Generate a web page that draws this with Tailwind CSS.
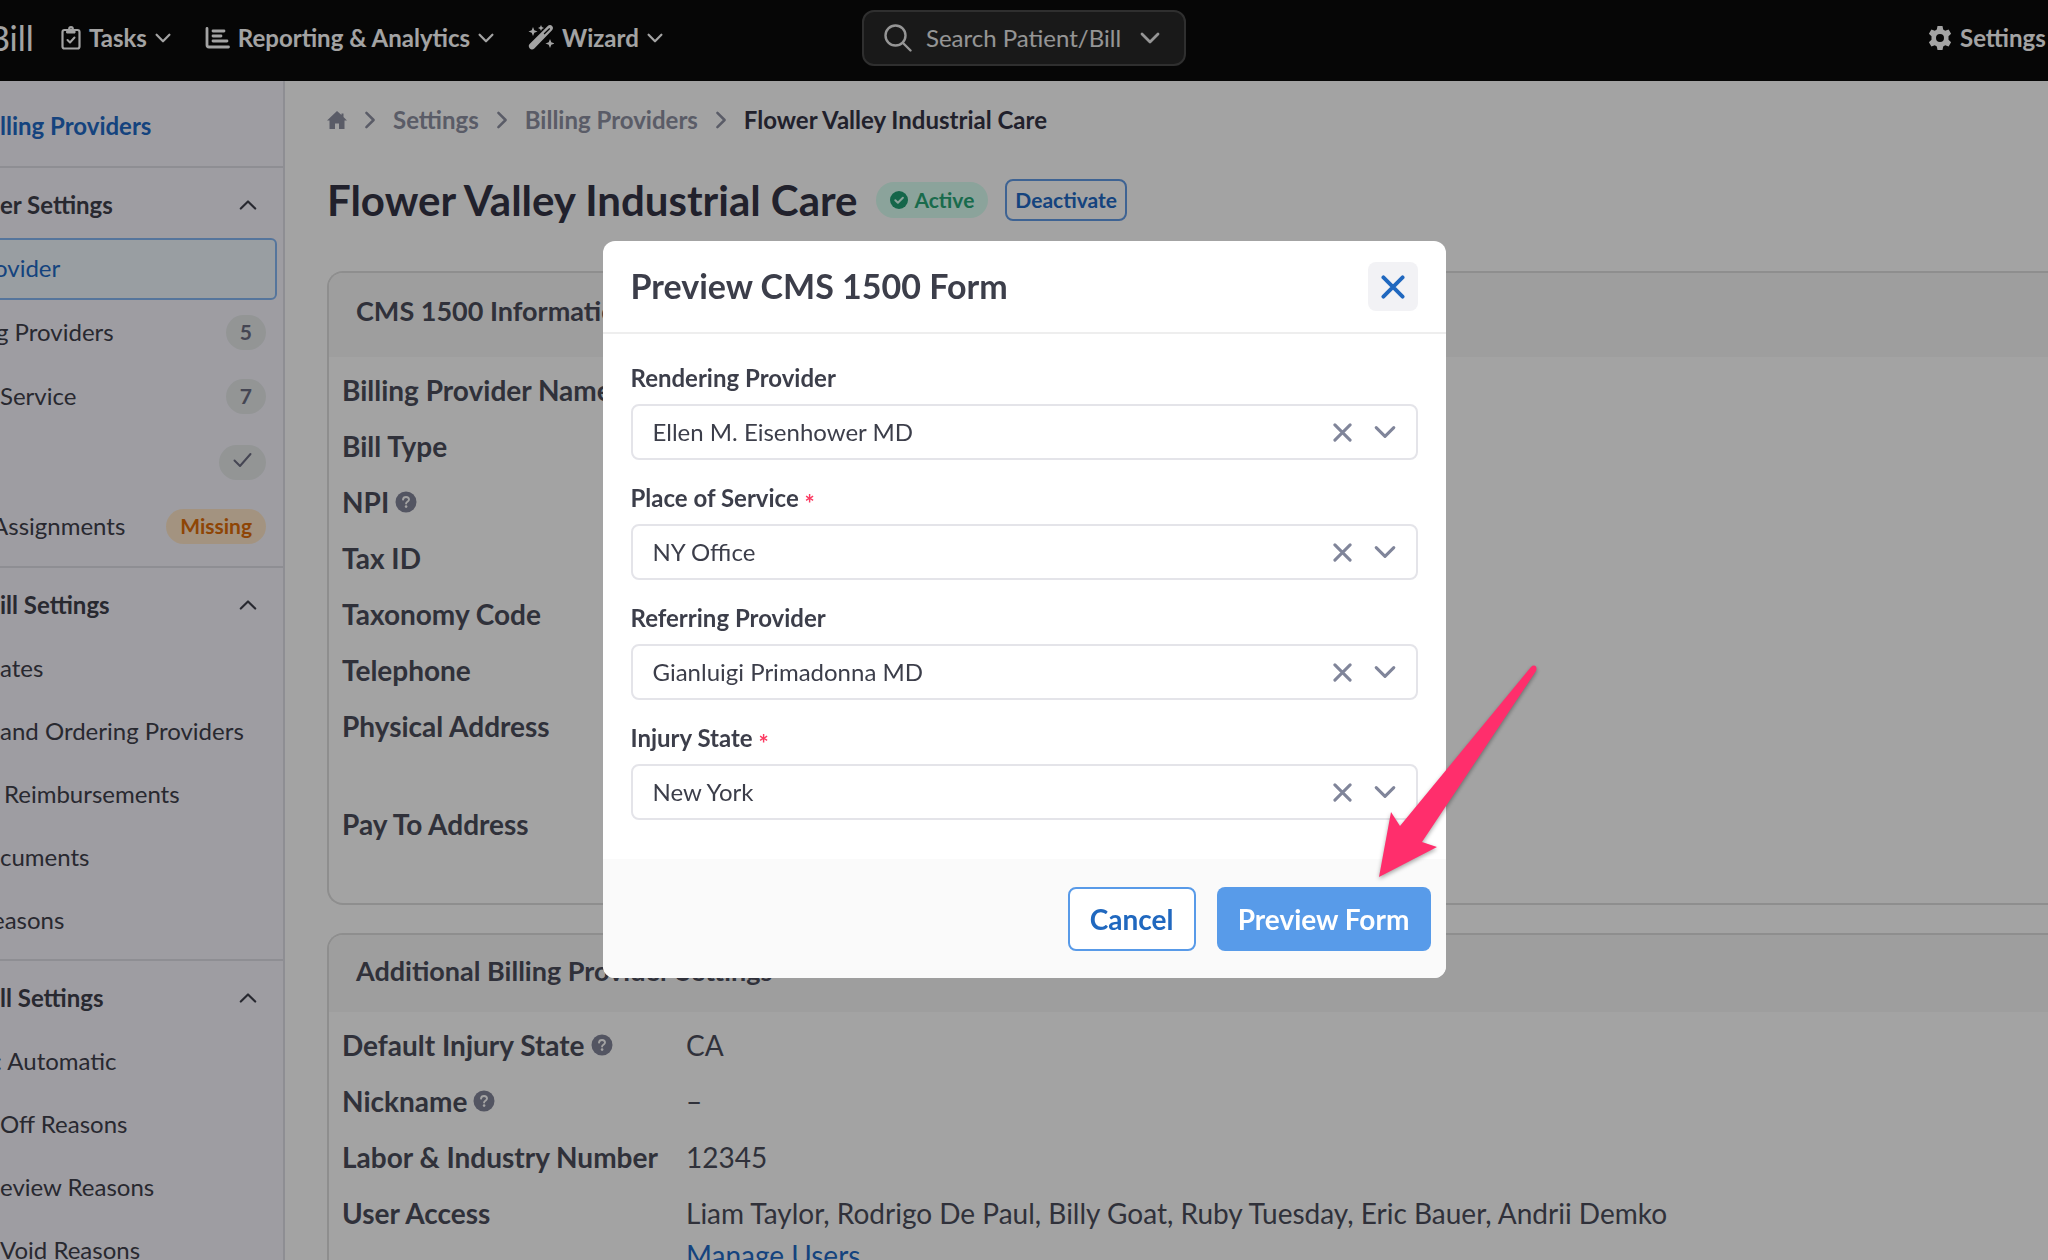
<!DOCTYPE html>
<html lang="en">
<head>
  <meta charset="UTF-8">
  <meta name="viewport" content="width=device-width, initial-scale=1.0">
  <title>Flower Valley Industrial Care</title>
  <script src="https://cdn.jsdelivr.net/npm/@tailwindcss/browser@4"></script>
</head>
<body class="h-screen overflow-hidden flex flex-col bg-white font-['Lato',sans-serif] text-[#4b4e5c]">

  <!-- Shared icons -->
  <svg class="hidden">
    <symbol id="chevron" viewBox="0 0 20 12"><path d="M2 2l8 8 8-8" fill="none" stroke="currentColor" stroke-width="2.800" stroke-linecap="round" stroke-linejoin="round"/></symbol>
    <symbol id="chevron-up" viewBox="0 0 20 12"><path d="M2 10l8-8 8 8" fill="none" stroke="currentColor" stroke-width="2.400" stroke-linecap="round" stroke-linejoin="round"/></symbol>
    <symbol id="chevron-right" viewBox="0 0 12 20"><path d="M2 2l8 8-8 8" fill="none" stroke="currentColor" stroke-width="2.800" stroke-linecap="round" stroke-linejoin="round"/></symbol>
    <symbol id="cross" viewBox="0 0 20 20"><path d="M2 2l16 16M18 2L2 18" fill="none" stroke="currentColor" stroke-width="3.200" stroke-linecap="round"/></symbol>
    <symbol id="help" viewBox="0 0 22 22"><circle cx="11" cy="11" r="10.5" fill="#838599"/><path d="M8 8.6C8.2 6.8 9.5 6 11 6c1.700 0 3 1 3 2.600 0 2.100-2.900 2.300-2.900 4" fill="none" stroke="#fff" stroke-width="1.900" stroke-linecap="round"/><circle cx="11.100" cy="15.600" r="1.300" fill="#fff"/></symbol>
  </svg>

  <!-- Top bar -->
  <header class="h-[81px] shrink-0 flex items-center bg-[#0a0a0a] text-white pb-1.5">
    <nav class="flex flex-1 items-center text-[24px] font-bold">
      <a href="#" class="-ml-5 w-[81px] text-[34px] font-normal pl-2">Bill</a>
      <button class="flex items-center gap-2 mr-[34px]">
        <svg class="w-5 h-6" viewBox="0 0 20 24" fill="none" stroke="currentColor" stroke-width="2.200" stroke-linecap="round" stroke-linejoin="round"><rect x="1.500" y="4" width="17" height="18.500" rx="2"/><path d="M6 4.500h8v2.500H6z" fill="currentColor" stroke-width="1"/><circle cx="10" cy="3" r="1.800"/><path d="M6.500 14l2.500 2.500 4.500-5" stroke-width="2"/></svg>
        <span>Tasks</span>
        <svg class="w-4 h-3"><use href="#chevron"/></svg>
      </button>
      <button class="flex items-center gap-2 mr-[34px]">
        <svg class="w-[25px] h-[22px]" viewBox="0 0 25 22" fill="none" stroke="currentColor" stroke-width="2.800" stroke-linecap="round"><path d="M2 1.500V18a2 2 0 0 0 2 2h19.500"/><path d="M8 4h11M8 9h8M8 14h14"/></svg>
        <span>Reporting &amp; Analytics</span>
        <svg class="w-4 h-3"><use href="#chevron"/></svg>
      </button>
      <button class="flex items-center gap-2">
        <svg class="w-[26px] h-[25px]" viewBox="0 0 26 25" fill="currentColor"><path fill-rule="evenodd" d="M1.600 19L19.500 1.200c1.500-1.500 3.400-1.500 4.600-.3s1.200 3.100-.3 4.600L6.300 23.400c-1.300 1.300-3.300 1.300-4.500.1s-1.500-3.200-.2-4.500zM16.500 9.500l5.700-5.500-.9-.9-5.700 5.500z"/><path d="M5 2l1.300 3.200L9.500 6.500 6.300 7.800 5 11 3.700 7.800.5 6.500l3.200-1.300zM13 0l.9 2.100 2.100.9-2.100.9L13 6l-.9-2.100L10 3l2.100-.9zM22 14l1.300 3.200 3.200 1.300-3.200 1.300L22 23l-1.300-3.200-3.200-1.300 3.200-1.300z"/></svg>
        <span>Wizard</span>
        <svg class="w-4 h-3"><use href="#chevron"/></svg>
      </button>
    </nav>
    <button class="w-[324px] h-14 flex items-center rounded-xl border-2 border-[#4a4a4a] bg-[#282828] px-5 text-[24px] text-[#e9e9e9]">
      <svg class="w-7 h-7 mr-3.5" viewBox="0 0 28 28" fill="none" stroke="currentColor" stroke-width="2.400" stroke-linecap="round"><circle cx="11.500" cy="11.500" r="10"/><path d="M19 19l7.500 7.500"/></svg>
      <span class="flex-1 text-left">Search Patient/Bill</span>
      <svg class="w-5 h-3 mr-1"><use href="#chevron"/></svg>
    </button>
    <div class="flex flex-1 justify-end overflow-hidden text-[24px] font-bold">
      <a href="#" class="flex items-center gap-2 w-[120px] whitespace-nowrap">
        <svg class="w-6 h-6 shrink-0" viewBox="0 0 24 24" fill="currentColor"><path fill-rule="evenodd" d="M9.500 0h5l.7 3.500 2 1.200 3.400-1.200 2.500 4.300L20.500 10.200v3.600l2.600 2.400-2.500 4.300-3.400-1.200-2 1.200-.7 3.500h-5l-.7-3.500-2-1.200-3.400 1.200L.9 16.200l2.600-2.400v-3.600L.9 7.800l2.500-4.300 3.400 1.200 2-1.200zM12 8a4 4 0 1 0 0 8 4 4 0 0 0 0-8z"/></svg>
        Settings
      </a>
    </div>
  </header>

  <div class="flex flex-1 min-h-0">
    <!-- Settings sidebar -->
    <aside class="w-[285px] shrink-0 overflow-hidden border-r-2 border-[#dedee6] bg-[#f7f6fe] text-[24px] text-[#3f404c] whitespace-nowrap">
      <a href="#" class="h-[85px] flex items-center pt-1 font-bold text-[#226ac6]">lling Providers</a>

      <section class="border-t-2 border-[#dedee6] pb-2">
        <h2 class="h-[70px] flex items-center justify-between pt-1 pr-[26px] font-bold">er Settings <svg class="w-[18px] h-3"><use href="#chevron-up"/></svg></h2>
        <a href="#" class="h-[62px] mb-0.5 mr-1.5 -ml-2 pb-0.5 flex items-center rounded-md border-2 border-[#86b8f5] bg-[#eff8fe] text-[#226ac6]">ovider</a>
        <a href="#" class="h-16 -ml-1 pb-1 pr-[17px] flex items-center justify-between">g Providers <span class="h-[35px] px-3.5 flex items-center rounded-full bg-[#e6e9ea] text-[21px] font-bold text-[#6d6e83]">5</span></a>
        <a href="#" class="h-16 pb-1 pr-[17px] flex items-center justify-between">Service <span class="h-[35px] px-3.5 flex items-center rounded-full bg-[#e6e9ea] text-[21px] font-bold text-[#6d6e83]">7</span></a>
        <a href="#" aria-label="Completed" class="h-16 pr-[17px] flex items-center justify-end"><span class="h-[35px] px-3.5 flex items-center rounded-full bg-[#e6e9ea] text-[#6d6e83]"><svg class="w-[19px] h-4 mb-1" viewBox="0 0 19 16" fill="none" stroke="currentColor" stroke-width="2" stroke-linecap="round" stroke-linejoin="round"><path d="M1.500 8.500l5.500 5.500L17.500 2"/></svg></span></a>
        <a href="#" class="h-16 -ml-2 pr-[17px] flex items-center justify-between">Assignments <span class="h-[35px] px-3.5 flex items-center rounded-full bg-[#ffe7c8] text-[21px] font-bold text-[#df6c08]">Missing</span></a>
      </section>

      <section class="border-t-2 border-[#dedee6] pb-1.5">
        <h2 class="h-[70px] flex items-center justify-between pt-1 pr-[26px] font-bold">ill Settings <svg class="w-[18px] h-3"><use href="#chevron-up"/></svg></h2>
        <a href="#" class="h-[63px] pb-1 flex items-center">ates</a>
        <a href="#" class="h-[63px] pb-1 flex items-center">and Ordering Providers</a>
        <a href="#" class="h-[63px] pb-1 pl-1 flex items-center">Reimbursements</a>
        <a href="#" class="h-[63px] pb-1 flex items-center">cuments</a>
        <a href="#" class="h-[63px] pb-1 -ml-2 flex items-center">easons</a>
      </section>

      <section class="border-t-2 border-[#dedee6]">
        <h2 class="h-[70px] flex items-center justify-between pt-1 pr-[26px] font-bold">ll Settings <svg class="w-[18px] h-3"><use href="#chevron-up"/></svg></h2>
        <a href="#" class="h-[63px] pb-1 -ml-1 flex items-center">: Automatic</a>
        <a href="#" class="h-[63px] pb-1 flex items-center">Off Reasons</a>
        <a href="#" class="h-[63px] pb-1 flex items-center">eview Reasons</a>
        <a href="#" class="h-[63px] pb-1 flex items-center">Void Reasons</a>
      </section>
    </aside>

    <main class="flex-1 min-w-0 overflow-hidden pl-[42px]">
      <nav aria-label="Breadcrumb" class="h-[77px] flex items-center gap-[17px] text-[24px] font-bold text-[#8e90a2]">
        <a href="#" aria-label="Home"><svg class="w-5 h-5" viewBox="0 0 20 20" fill="currentColor"><path d="M10 1L0 10.500h2.500V19H8v-5.500h4V19h5.500v-8.500H20L16.500 7V3.500h-2V5z"/></svg></a>
        <svg class="w-3 h-[18px]"><use href="#chevron-right"/></svg>
        <a href="#">Settings</a>
        <svg class="w-3 h-[18px]"><use href="#chevron-right"/></svg>
        <a href="#">Billing Providers</a>
        <svg class="w-3 h-[18px]"><use href="#chevron-right"/></svg>
        <span class="text-[#353546]">Flower Valley Industrial Care</span>
      </nav>

      <div class="h-[84px] mb-[29px] flex items-center">
        <h1 class="text-[42px] font-bold text-[#353546] mr-[19px]">Flower Valley Industrial Care</h1>
        <span class="h-9 px-3.5 mr-[17px] flex items-center gap-1.5 rounded-full bg-[#d9fff2] text-[21px] font-bold text-[#28a878]">
          <svg class="w-[18px] h-[18px]" viewBox="0 0 18 18"><circle cx="9" cy="9" r="9" fill="#22a074"/><path d="M5.300 9.300l2.600 2.500 5-5" fill="none" stroke="#d9fff2" stroke-width="2" stroke-linecap="round" stroke-linejoin="round"/></svg>
          Active
        </span>
        <button class="h-[42px] px-2 rounded-lg border-2 border-[#629be6] text-[21px] font-bold text-[#226ac6]">Deactivate</button>
      </div>

      <section class="mb-7 rounded-l-2xl border-2 border-r-0 border-[#dedede] overflow-hidden">
        <h2 class="h-[84px] pl-[27px] pt-[18px] leading-10 bg-[#f8f8f8] text-[27px] font-bold">CMS 1500 Information</h2>
        <dl class="h-[546px] pt-[5px] pl-[13px] grid grid-cols-[344px_1fr] content-start text-[28px] leading-[42px] *:py-[7px]">
          <dt class="font-bold">Billing Provider Name</dt><dd></dd>
          <dt class="font-bold">Bill Type</dt><dd></dd>
          <dt class="font-bold flex items-center gap-1.5">NPI <svg class="w-[22px] h-[22px]"><use href="#help"/></svg></dt><dd></dd>
          <dt class="font-bold">Tax ID</dt><dd></dd>
          <dt class="font-bold">Taxonomy Code</dt><dd></dd>
          <dt class="font-bold">Telephone</dt><dd></dd>
          <dt class="font-bold">Physical Address</dt><dd class="h-[98px]"></dd>
          <dt class="font-bold">Pay To Address</dt><dd></dd>
        </dl>
      </section>

      <section class="rounded-l-2xl border-2 border-r-0 border-[#dedede] overflow-hidden">
        <h2 class="h-[77px] pl-[27px] pt-4 leading-10 bg-[#f8f8f8] text-[27px] font-bold">Additional Billing Provider Settings</h2>
        <dl class="pt-[5px] pl-[13px] grid grid-cols-[344px_1fr] content-start text-[28px] leading-[42px] *:py-[7px]">
          <dt class="font-bold flex items-center gap-1.5">Default Injury State <svg class="w-[22px] h-[22px]"><use href="#help"/></svg></dt><dd>CA</dd>
          <dt class="font-bold flex items-center gap-1.5">Nickname <svg class="w-[22px] h-[22px]"><use href="#help"/></svg></dt><dd>–</dd>
          <dt class="font-bold">Labor &amp; Industry Number</dt><dd>12345</dd>
          <dt class="font-bold">User Access</dt>
          <dd>Liam Taylor, Rodrigo De Paul, Billy Goat, Ruby Tuesday, Eric Bauer, Andrii Demko<br><a href="#" class="text-[#226ac6]">Manage Users</a></dd>
        </dl>
      </section>
    </main>
  </div>

  <!-- Modal -->
  <div class="fixed inset-0 flex items-start justify-center bg-black/36 pt-[241px]">
    <form role="dialog" aria-labelledby="modalTitle" class="w-[843px] rounded-xl overflow-hidden bg-white text-[#3c3e4a]">
      <div class="flex items-center justify-between h-[93px] px-7 border-b-2 border-[#eeeeee]">
        <h2 id="modalTitle" class="pb-0.5 text-[34px] font-bold">Preview CMS 1500 Form</h2>
        <button type="button" aria-label="Close" class="w-[50px] h-[49px] flex items-center justify-center rounded-lg bg-[#f2f2f5] text-[#2068bf]"><svg class="w-6 h-6"><use href="#cross"/></svg></button>
      </div>

      <div class="px-7 pt-[26px] pb-[39px] flex flex-col gap-5 text-[24px]">
        <div>
          <label for="rendering" class="block mb-2 leading-9 font-bold">Rendering Provider</label>
          <div class="relative">
            <select id="rendering" class="w-full h-14 px-5 appearance-none rounded-lg border-2 border-[#e4e4e9]"><option>Ellen M. Eisenhower MD</option></select>
            <div class="absolute inset-y-0 right-[22px] flex items-center gap-[22px] text-[#80859a] pointer-events-none"><svg class="w-[19px] h-[19px]"><use href="#cross"/></svg><svg class="w-[22px] h-[14px]"><use href="#chevron"/></svg></div>
          </div>
        </div>
        <div>
          <label for="place" class="block mb-2 leading-9 font-bold">Place of Service <span class="align-sub leading-none text-[#fb3b62]">*</span></label>
          <div class="relative">
            <select id="place" required class="w-full h-14 px-5 appearance-none rounded-lg border-2 border-[#e4e4e9]"><option>NY Office</option></select>
            <div class="absolute inset-y-0 right-[22px] flex items-center gap-[22px] text-[#80859a] pointer-events-none"><svg class="w-[19px] h-[19px]"><use href="#cross"/></svg><svg class="w-[22px] h-[14px]"><use href="#chevron"/></svg></div>
          </div>
        </div>
        <div>
          <label for="referring" class="block mb-2 leading-9 font-bold">Referring Provider</label>
          <div class="relative">
            <select id="referring" class="w-full h-14 px-5 appearance-none rounded-lg border-2 border-[#e4e4e9]"><option>Gianluigi Primadonna MD</option></select>
            <div class="absolute inset-y-0 right-[22px] flex items-center gap-[22px] text-[#80859a] pointer-events-none"><svg class="w-[19px] h-[19px]"><use href="#cross"/></svg><svg class="w-[22px] h-[14px]"><use href="#chevron"/></svg></div>
          </div>
        </div>
        <div>
          <label for="state" class="block mb-2 leading-9 font-bold">Injury State <span class="align-sub leading-none text-[#fb3b62]">*</span></label>
          <div class="relative">
            <select id="state" required class="w-full h-14 px-5 appearance-none rounded-lg border-2 border-[#e4e4e9]"><option>New York</option></select>
            <div class="absolute inset-y-0 right-[22px] flex items-center gap-[22px] text-[#80859a] pointer-events-none"><svg class="w-[19px] h-[19px]"><use href="#cross"/></svg><svg class="w-[22px] h-[14px]"><use href="#chevron"/></svg></div>
          </div>
        </div>
      </div>

      <div class="flex justify-end gap-[21px] bg-[#fafafa] pt-7 pb-[27px] pr-[15px] text-[28px] font-bold">
        <button type="button" class="h-16 w-32 rounded-lg border-2 border-[#589ae8] bg-white text-[#2068bf]">Cancel</button>
        <button class="h-16 w-[214px] rounded-lg bg-[#589be9] text-white">Preview Form</button>
      </div>
    </form>

    <!-- Pointer to the submit button -->
    <svg class="absolute top-[660px] left-1/2 ml-[346px] w-[176px] h-[226px] drop-shadow-[0_2px_2px_rgb(0_0_0/0.35)]" viewBox="0 0 176 226"><path d="M9 217L21 152l9 14L161 7c3-3 7-1 5 4L52 182l15 5z" fill="#ff2e6c"/></svg>
  </div>
</body>
</html>
